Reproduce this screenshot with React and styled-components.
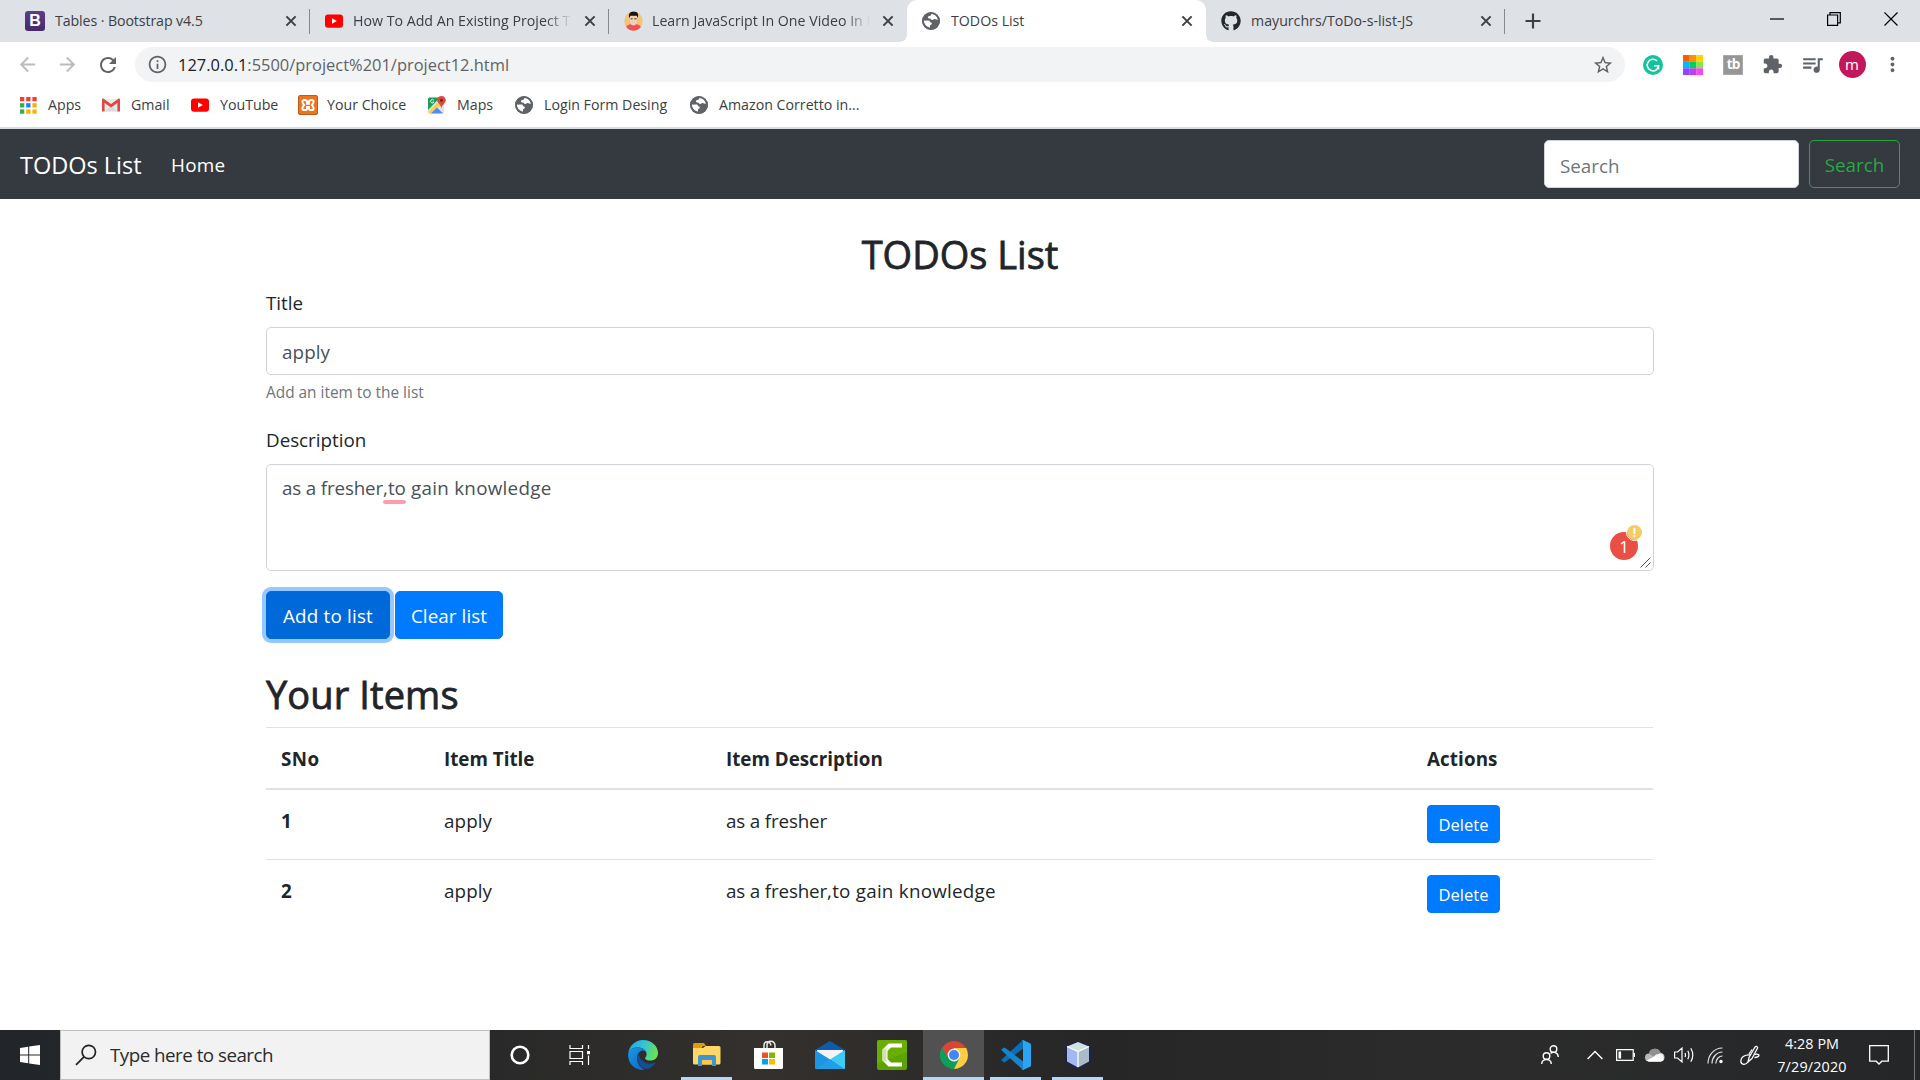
import React from "react";
import styled, { createGlobalStyle } from "styled-components";
import {
  MdInfoOutline,
  MdStarBorder,
  MdExtension,
  MdQueueMusic,
  MdMoreVert,
  MdArrowBack,
  MdArrowForward,
  MdRefresh,
} from "react-icons/md";
import { FaGithub } from "react-icons/fa";

const Global = createGlobalStyle`
  *, *::before, *::after { box-sizing: border-box; }
  html, body { margin: 0; padding: 0; background: #fff; overflow: hidden; }
  body { font-family: "Open Sans", "Noto Sans", sans-serif; color: #212529; font-size: 18.8px; }
  svg { display: block; flex: none; }
  button, input, textarea { font-family: inherit; }
`;

const Screen = styled.div`
  width: 1920px;
  height: 1080px;
  display: flex;
  flex-direction: column;
  overflow: hidden;
`;

const Label = styled.span`
  white-space: nowrap;
  letter-spacing: ${(p) => p.$ls || 0}px;
`;

/* ---------- browser tabs ---------- */
const TabStrip = styled.div`
  height: 42px;
  flex: none;
  display: flex;
  background: #dee1e6;
  padding-left: 10px;
`;
const Tab = styled.div`
  width: ${(p) => p.$w || 299}px;
  height: 42px;
  display: flex;
  align-items: center;
  padding: 0 13px 1px 15px;
  flex: none;
  border-radius: ${(p) => (p.$active ? "10px 10px 0 0" : "0")};
  background: ${(p) => (p.$active ? "#fff" : "transparent")};
  font-size: 14.2px;
  color: #3c4043;
`;
const TabTitle = styled.div`
  flex: 1;
  margin-left: ${(p) => p.$ml || 10}px;
  overflow: hidden;
  white-space: nowrap;
  letter-spacing: ${(p) => p.$ls || 0}px;
  ${(p) => p.$fade && "mask-image: linear-gradient(90deg, #000 88%, transparent 100%);"}
`;
const TabClose = styled.div`
  width: 12px;
  margin-left: 12px;
`;
const TabSeparator = styled.div`
  width: 1px;
  height: 25px;
  margin-top: 9px;
  margin-left: -1px;
  background: #85888c;
`;
const TabFoot = styled.div`
  width: 7px;
  height: 7px;
  align-self: flex-end;
  flex: none;
  margin-left: ${(p) => (p.$side === "left" ? "-7px" : "0")};
  margin-right: ${(p) => (p.$side === "left" ? "0" : "-7px")};
  background: radial-gradient(circle at ${(p) => (p.$side === "left" ? "0 0" : "100% 0")}, transparent 6.5px, #fff 7px);
`;
const NewTab = styled.div`
  margin: 13px 0 0 20px;
`;
const WindowControls = styled.div`
  margin-left: auto;
  display: flex;
  align-items: center;
  height: 37px;
  gap: 43px;
  padding-right: 22px;
`;

/* ---------- toolbar ---------- */
const Toolbar = styled.div`
  height: 45px;
  flex: none;
  display: flex;
  align-items: center;
  padding-left: 16px;
`;
const NavIcons = styled.div`
  display: flex;
  gap: 17px;
  width: 119px;
  color: #5f6368;
`;
const Omnibox = styled.div`
  width: 1490px;
  height: 35px;
  border-radius: 18px;
  background: #f1f3f4;
  display: flex;
  align-items: center;
  padding: 0 11px 0 12px;
  color: #5f6368;
`;
const Url = styled.div`
  flex: 1;
  margin-left: 10px;
  font-size: 16.45px;
  line-height: 30px;
  b { font-weight: 400; color: #202124; }
`;
const Extensions = styled.div`
  display: flex;
  align-items: center;
  margin-left: 16px;
  color: #5f6368;
`;
const ExtSlot = styled.div`
  width: ${(p) => p.$w || 40}px;
  display: flex;
  justify-content: center;
  flex: none;
`;
const Round = styled.div`
  width: ${(p) => p.$d}px;
  height: ${(p) => p.$d}px;
  border-radius: 50%;
  background: ${(p) => p.$bg};
  color: #fff;
  display: flex;
  align-items: center;
  justify-content: center;
  font-size: ${(p) => p.$fs}px;
  line-height: 1;
`;
const GrammarIcon = () => (
  <svg width="20" height="20" viewBox="0 0 20 20">
    <circle cx="10" cy="10" r="10" fill="#15c39a" />
    <path d="M14 5.800A5.800 5.800 0 1015.800 10.400M11 10.800h4.500v3.600" fill="none" stroke="#fff" strokeWidth="1.600" />
  </svg>
);

/* ---------- bookmarks ---------- */
const Bookmarks = styled.div`
  height: 40px;
  flex: none;
  display: flex;
  align-items: center;
  padding: 0 0 4px 20px;
  font-size: 14.2px;
  color: #3c4043;
`;
const Bookmark = styled.div`
  width: ${(p) => p.$w}px;
  flex: none;
  display: flex;
  align-items: center;
`;
const BookmarkIcon = styled.div`
  width: ${(p) => p.$w || 29}px;
  flex: none;
`;
const BookmarkName = styled.span`
  white-space: nowrap;
  padding-bottom: 2px;
`;
const ChromeEdge = styled.div`
  height: 2px;
  flex: none;
  background: #dadce0;
`;

/* ---------- page ---------- */
const Navbar = styled.nav`
  height: 70px;
  flex: none;
  background: #343a40;
  display: flex;
  align-items: center;
  padding: 0 20px;
  color: #fff;
`;
const Brand = styled.div`
  width: 151px;
  font-size: 23.5px;
  line-height: 36px;
  padding-top: 2px;
`;
const NavLink = styled.div`
  font-size: 18.9px;
  letter-spacing: 0.2px;
  padding-top: 2px;
`;
const NavForm = styled.div`
  margin-left: auto;
  display: flex;
  gap: 10px;
`;
const SearchInput = styled.input`
  width: 255px;
  height: 48px;
  border: 1px solid #ced4da;
  border-radius: 5px;
  padding: 3px 16px 0 15px;
  font-size: 18.8px;
  background: #fff;
  &::placeholder { color: #6c757d; opacity: 1; }
`;
const Button = styled.button`
  width: ${(p) => p.$w}px;
  height: ${(p) => p.$h || 48}px;
  padding: ${(p) => p.$pad || "2px 0 0"};
  border: 1px solid ${(p) => p.$border || p.$bg};
  border-radius: ${(p) => p.$r || 5}px;
  background: ${(p) => p.$bg};
  color: ${(p) => p.$color || "#fff"};
  font-size: ${(p) => p.$fs || 18.8}px;
  letter-spacing: ${(p) => p.$ls || 0}px;
  white-space: nowrap;
  box-shadow: ${(p) => (p.$focus ? "0 0 0 4px #94c8fe" : "none")};
`;
const Page = styled.main`
  flex: 1;
  width: 1388px;
  margin: 0 auto;
  display: flex;
  flex-direction: column;
`;
const Heading = styled.h2`
  margin: ${(p) => p.$m};
  height: 48px;
  line-height: 46px;
  font-size: 38px;
  font-weight: 500;
  letter-spacing: ${(p) => p.$ls || 0}px;
  text-align: ${(p) => p.$align || "left"};
  -webkit-text-stroke: 0.8px #212529;
`;
const FieldLabel = styled.label`
  margin-top: ${(p) => p.$mt || 0}px;
  height: 30px;
  line-height: 30px;
`;
const TextField = styled.input`
  margin-top: 9px;
  width: 100%;
  height: 48px;
  border: 1px solid #ced4da;
  border-radius: 5px;
  padding: 1px 16px 0 15px;
  font-size: 18.8px;
  letter-spacing: 0.1px;
  color: #495057;
`;
const Hint = styled.small`
  margin-top: 6px;
  height: 24px;
  line-height: 24px;
  font-size: 15.4px;
  color: #6c757d;
`;
const AreaWrap = styled.div`
  position: relative;
  margin-top: 9px;
  height: 107px;
  border: 1px solid #ced4da;
  border-radius: 5px;
  padding: 8px 15px;
  line-height: 30px;
  color: #495057;
`;
const Misspelt = styled.span`
  position: relative;
  &::after {
    content: "";
    position: absolute;
    left: 0;
    right: 0;
    bottom: -3px;
    height: 4px;
    border-radius: 2px;
    background: #ff9caf;
  }
`;
const Badge = styled.div`
  position: absolute;
  right: 15px;
  bottom: 10px;
`;
const Alert = styled.div`
  position: absolute;
  right: -5px;
  top: -8px;
  border: 1px solid #fff;
  border-radius: 50%;
  font-weight: 700;
`;
const Grip = styled.div`
  position: absolute;
  right: 2px;
  bottom: 2px;
`;
const Actions = styled.div`
  margin-top: 20px;
  display: flex;
  gap: 5px;
`;
const Row = styled.div`
  display: grid;
  width: 1387px;
  grid-template-columns: 163px 282px 701px 1fr;
  height: ${(p) => p.$h}px;
  padding: 15px 0 0 15px;
  border-top: 1px solid #dee2e6;
  border-bottom: ${(p) => (p.$head ? "2px solid #dee2e6" : "0")};
  margin-top: ${(p) => (p.$flush ? "-1px" : "0")};
  line-height: 30px;
  align-items: start;
  font-weight: ${(p) => (p.$head ? 700 : 400)};
`;
const Cell = styled.div`
  padding-top: 1px;
  font-weight: ${(p) => (p.$bold ? 700 : "inherit")};
  letter-spacing: ${(p) => p.$ls || 0}px;
  white-space: nowrap;
`;

/* ---------- taskbar ---------- */
const Taskbar = styled.footer`
  height: 50px;
  flex: none;
  display: flex;
  align-items: stretch;
  background: linear-gradient(90deg, #22262a 0, #292929 490px, #33302d 760px, #2f2d2b 880px, #262627 1100px, #2c2c2c 1500px, #242628 1920px);
  color: #fff;
`;
const Slot = styled.div`
  width: ${(p) => p.$w || 62}px;
  flex: none;
  display: flex;
  align-items: center;
  justify-content: center;
  background: ${(p) => (p.$current ? "#515151" : "transparent")};
  box-shadow: ${(p) => (p.$current ? "inset 0 -3px #b0d8fb" : "none")};
`;
const RunningSlot = styled(Slot)`
  width: 51px;
  margin: 0 5px 0 6px;
  box-shadow: inset 0 -3px #b0d8fb;
`;
const TaskSearch = styled.div`
  width: 430px;
  border: 1px solid #bfbfbf;
  background: #f2f2f2;
  display: flex;
  align-items: center;
  padding-left: 14px;
  gap: 13px;
  font-size: 18.8px;
  color: #2b2b2b;
`;
const Tray = styled.div`
  margin-left: auto;
  display: flex;
  align-items: center;
`;
const Clock = styled.div`
  width: 86px;
  display: flex;
  flex-direction: column;
  align-items: center;
  font-size: 14.4px;
  line-height: 23px;
`;
const PeekEdge = styled.div`
  width: 6px;
  height: 50px;
  border-left: 1px solid #77797b;
`;

/* ---------- icons ---------- */
const Close = () => (
  <svg width="12" height="12" viewBox="0 0 12 12" stroke="#3c4043" strokeWidth="2">
    <path d="M1.4 1.4l9.2 9.2M10.6 1.4l-9.2 9.2" />
  </svg>
);
const Bootstrap = styled.div`
  width: 20px;
  height: 20px;
  border-radius: 3px;
  background: linear-gradient(#5b3d88, #45296b);
  color: #fff;
  font: 700 16px/20px "Liberation Sans", sans-serif;
  text-align: center;
  flex: none;
`;
const YouTube = () => (
  <svg width="18" height="18" viewBox="0 0 18 18">
    <rect x="0" y="2.4" width="18" height="13.4" rx="3" fill="#f00" />
    <path d="M7 6.2v5.6l4.8-2.8z" fill="#fff" />
  </svg>
);
const Globe = () => (
  <svg width="18" height="18" viewBox="0 0 18 18">
    <circle cx="9" cy="9" r="9" fill="#5f6368" />
    <path
      d="M9.6 1.9c-.9.5-.4 1.3-1.3 1.9-1 .6-2.3.2-2.4 1.5 0 1 .9 1.2 1.9 1.2 1.2 0 1.1 1.3 2.2 1.4 1.3.1 1.4-1.2 2.7-1 1.5.2 1.6.9 3.3.9-.2-3-2.9-5.9-6.4-5.9zM1.8 8.6c.1 3.7 2.7 6.5 6.2 7.2v-2c.1-1 1.5-.9 1.8-2.1.3-1.2-1.5-1-1.9-1.9-.4-.8-.2-1.3-1.6-1.3-1.7.1-2.9.3-4.5.1z"
      fill="#fff"
    />
    <circle cx="9" cy="9" r="8" fill="none" stroke="#5f6368" strokeWidth="1.6" />
  </svg>
);
const Portrait = () => (
  <svg width="19" height="20" viewBox="0 0 19 20">
    <defs>
      <clipPath id="face"><ellipse cx="9.5" cy="10" rx="9.2" ry="9.8" /></clipPath>
    </defs>
    <g clipPath="url(#face)">
      <rect width="19" height="20" fill="#f3c579" />
      <path d="M1 20c0-6 4-7 8.500-7s8.500 1 8.500 7z" fill="#f0525a" />
      <path d="M6 5h7v5q-.5 4.500-3.500 4.500T6 10z" fill="#f0d0ba" />
      <path d="M5.200 7C4 2.500 6.500.3 9.700.5c4 0 5.300 2.500 4 6.500l-.9-2.200H6.500z" fill="#1b1412" />
      <path d="M6.500 7.800h2.200M10.300 7.800h2.200" stroke="#4a332a" strokeWidth="1" />
    </g>
  </svg>
);
const AppsGrid = () => (
  <svg width="17" height="17" viewBox="0 0 17 17">
    {["#ea4335", "#ea4335", "#ea4335", "#34a853", "#1a82f5", "#fbb004", "#34a853", "#fbb004", "#fbb004"].map((c, i) => (
      <rect key={i} x={(i % 3) * 6.2} y={Math.floor(i / 3) * 6.2} width="4.3" height="4.3" fill={c} />
    ))}
  </svg>
);
const Gmail = () => (
  <svg width="18" height="18" viewBox="0 0 18 18">
    <path d="M1 3h16v12.500H1z" fill="#eceaea" />
    <path d="M2.500 15.500L9 9.500l6.500 6z" fill="#dcdada" />
    <path d="M0 3.800C0 2.600 1.200 2.300 2 2.900L9 8l7-5.100c.8-.6 2-.3 2 .9v11.700h-2.600V7L9 11.500 2.600 7v8.500H0z" fill="#dd4b3e" />
  </svg>
);
const Xampp = () => (
  <svg width="20" height="20" viewBox="0 0 20 20">
    <rect x=".5" y=".5" width="19" height="19" rx="1.500" fill="#f0731e" stroke="#bd5c1a" />
    <path
      d="M9 8.800V6.600C9 4.400 4.400 4.400 4.400 6.600c0 1.600.8 2 1.800 3.400-1 1.400-1.800 1.800-1.800 3.400 0 2.200 4.600 2.200 4.600 0V12h2v1.400c0 2.200 4.600 2.200 4.600 0 0-1.600-.8-2-1.800-3.400 1-1.400 1.800-1.800 1.800-3.400 0-2.200-4.600-2.200-4.600 0V8.800z"
      fill="none"
      stroke="#fff"
      strokeWidth="1.900"
    />
  </svg>
);
const Maps = () => (
  <svg width="18" height="18" viewBox="0 0 18 18">
    <rect y="1.500" width="16" height="16" rx="1.500" fill="#dfe3e6" />
    <path d="M0 3a1.500 1.500 0 011.500-1.500H12L0 14z" fill="#1e9d58" />
    <path d="M0 16L10.500 5.500l3 3L4.500 17.500H1.500z" fill="#fcd04b" />
    <path d="M3 17.500l6-6 6 6z" fill="#4b8df8" />
    <path d="M13.500 0A4.300 4.300 0 009.200 4.300c0 3 3.600 4.200 4.300 8 .7-3.800 4.300-5 4.300-8A4.300 4.300 0 0013.500 0z" fill="#dd4b3e" />
    <circle cx="13.500" cy="4.300" r="1.500" fill="#7c1f16" />
    <path d="M5.800 4.200A1.800 1.800 0 106 6H4.500" stroke="#fff" strokeWidth=".9" fill="none" />
  </svg>
);
const ColorGrid = () => (
  <svg width="20" height="20" viewBox="0 0 21 21">
    {["#ff5a00", "#ff9000", "#ffd400", "#00b8ff", "#00cf5d", "#85e34c", "#8d48ff", "#c43cf5", "#ff42f7"].map((c, i) => (
      <rect key={i} x={(i % 3) * 7} y={Math.floor(i / 3) * 7} width="7.1" height="7.1" fill={c} />
    ))}
  </svg>
);
const TubeBuddy = styled.div`
  width: 20px;
  height: 20px;
  background: #969696;
  border: 1px solid #aaa;
  color: #fff;
  font: 700 13.5px/17px "Open Sans", sans-serif;
  letter-spacing: -1px;
  text-align: center;
`;
const Windows = () => (
  <svg width="20" height="20" viewBox="0 0 20 20" fill="#fff">
    <path d="M0 2.900l8.200-1.100v7.700H0zM9.200 1.600L20 0v9.500H9.200zM0 10.500h8.200v7.700L0 17.100zM9.200 10.500H20V20L9.200 18.400z" />
  </svg>
);
const Magnifier = () => (
  <svg width="22" height="22" viewBox="0 0 22 22" fill="none" stroke="#222" strokeWidth="1.700">
    <circle cx="13.800" cy="8" r="6.700" />
    <path d="M9 12.800L1 20.800" />
  </svg>
);
const TaskView = () => (
  <svg width="22" height="20" viewBox="0 0 22 20" fill="none" stroke="#fff" strokeWidth="1.200">
    <path d="M1 0v3.500h12.500V0M1 6.500h12.500v7H1zM1 20v-3.500h12.500V20M19.500 0v4M19.500 10.500V20" />
    <path d="M18 6h3v3.200h-3z" fill="#fff" stroke="none" />
  </svg>
);
const Edge = () => (
  <svg width="30" height="30" viewBox="0 0 30 30">
    <defs>
      <linearGradient id="ed1" x1="0" x2="1" y1=".2" y2=".5">
        <stop offset="0" stopColor="#1ea8e8" />
        <stop offset=".5" stopColor="#35c3d5" />
        <stop offset="1" stopColor="#6be34f" />
      </linearGradient>
      <linearGradient id="ed2" x1="0" x2="1" y1="0" y2="1">
        <stop offset="0" stopColor="#1a9be6" />
        <stop offset="1" stopColor="#0a63bd" />
      </linearGradient>
    </defs>
    <path d="M.3 13C1.500 5.500 7.500 0 15 0c8.500 0 15 6 15 13 0 5-3.500 7.600-7.600 7.600-3.600 0-5.400-1.300-5.400-2.400 0-.7 1.600-1.400 1.600-4C18.600 10 14.500 7.500 9.800 7.500 5 7.500 1.500 9.500.3 13z" fill="url(#ed1)" />
    <path d="M.2 14C.6 9.800 4.500 7.500 9.800 7.500c4.700 0 8 2.500 8.600 5.200-1.300-2-3.400-2.600-5-2-3 1.200-4.400 4.500-4.400 7.600 0 5 3.300 9.500 8 11.500C7.500 31 .1 24 .1 15z" fill="url(#ed2)" />
    <path d="M11.500 13c-3.500 5.500-1.500 11.500 3 14.500 4.500 2.700 9.500.8 12.600-4 .5-.8-.1-1.200-.8-.8-2.600 1.300-6.600 1.300-9.600-.4-4-2.100-6.300-5.800-5.200-9.300z" fill="#134f97" />
  </svg>
);
const Folder = () => (
  <svg width="28" height="24" viewBox="0 0 28 24">
    <path d="M0 1.500Q0 0 1.500 0H11l2 3h-3L8 6H0z" fill="#e39a00" />
    <path d="M0 5l10 0 2.500-2H26q1.500 0 1.500 1.500V20q0 1.500-1.500 1.500H1.500Q0 21.500 0 20z" fill="#ffd765" />
    <path d="M5 23V14q0-2 2-2h14q2 0 2 2v9h-4v-6H9v6z" fill="#3f94d6" />
    <path d="M9 17h10v4.500H9z" fill="#fcc742" />
  </svg>
);
const Store = () => (
  <svg width="29" height="30" viewBox="0 0 29 30">
    <path d="M10 9V5.500C10 .5 16 .5 17 5.500M13 9V4.500C14 -.5 21 .5 21 6v3" fill="none" stroke="#e8e8e8" strokeWidth="1.500" />
    <path d="M0 8h29v19.500Q29 29 27.500 29h-26Q0 29 0 27.500z" fill="#fff" />
    <path d="M8 12.500h6v5.500H8z" fill="#f25022" />
    <path d="M15 12.500h6v5.500h-6z" fill="#7fba00" />
    <path d="M8 19h6v5.500H8z" fill="#00a4ef" />
    <path d="M15 19h6v5.500h-6z" fill="#ffb900" />
  </svg>
);
const Mail = () => (
  <svg width="30" height="28" viewBox="0 0 30 28">
    <path d="M0 9L15 0l15 9v6H0z" fill="#0b5cad" />
    <path d="M2 9h26v4L15 19 2 12z" fill="#f4f4f4" />
    <path d="M0 9l15 9.500L30 28H1q-1 0-1-1z" fill="#1b96e2" />
    <path d="M30 9L15 18.500 29 28q1 0 1-1z" fill="#3dcaf4" />
    <path d="M15 18.500L1 28h28z" fill="#209fe6" />
  </svg>
);
const Camtasia = () => (
  <svg width="30" height="30" viewBox="0 0 30 30">
    <rect width="30" height="30" rx="2" fill="#5da300" />
    <path d="M0 2q0-2 2-2h26q2 0 2 2v10L0 24z" fill="#73b505" opacity=".6" />
    <path d="M11.500 3.500H25v4H14l-3.500 3.500v8l3.500 3.500h11v4H11.500l-6-6v-11z" fill="#fff" />
    <path d="M5.500 9.500L9.500 8v14l-4-1.500z" fill="#cfe3b0" />
  </svg>
);
const Chrome = () => (
  <svg width="28" height="28" viewBox="0 0 28 28">
    <path d="M14 14L1.880 7A14 14 0 0126.120 7z" fill="#db4437" />
    <path d="M14 14L26.120 7A14 14 0 0114 28z" fill="#ffcd40" />
    <path d="M14 14v14A14 14 0 011.880 7z" fill="#0f9d58" />
    <path d="M14 7.600h12.400l-.3-.6H14zM14 7.600L26.400 7.600 19.500 17.200z" fill="#ffcd40" />
    <path d="M1.880 7L8.500 17.200 14 7.600z" fill="#db4437" />
    <path d="M1.880 7L8.500 17.200 14 20.400 19.500 17.200 14 28A14 14 0 011.880 7z" fill="#0f9d58" />
    <circle cx="14" cy="14" r="6.400" fill="#f1f1f1" />
    <circle cx="14" cy="14" r="5" fill="#4285f4" />
  </svg>
);
const VSCode = () => (
  <svg width="30" height="30" viewBox="0 0 30 30">
    <path d="M.7 19.500L21.500.5l2 7L4 22.300q-.7.500-1.300 0L.7 20.700q-.7-.6 0-1.200z" fill="#0a6fb5" />
    <path d="M.7 10.500L21.500 29.500l2-7L4 7.700q-.7-.5-1.300 0L.7 9.300q-.7.600 0 1.200z" fill="#1585cf" />
    <path d="M22 0l7 3.200q1 .5 1 1.500v20.600q0 1-1 1.500L22 30q-1 0-1.500-.5 1.500.3 1.500-2V2.500q0-2.300-1.500-2Q21 0 22 0z" fill="#29a5f2" />
  </svg>
);
const Cube = () => (
  <svg width="28" height="30" viewBox="0 0 28 30">
    <path d="M14 2.500L25.500 7v14.500L14 27.500 2.500 21.500V7z" fill="#1d2750" stroke="#20224e" strokeWidth="3" strokeLinejoin="round" />
    <path d="M14 2l11 4.500-11 5-11-5z" fill="#cfe3dc" />
    <path d="M3 6.500l11 5v16L3 21.500z" fill="#a3b8f0" />
    <path d="M25 6.500l-11 5v16l11-6z" fill="#a9bac9" />
    <path d="M3 6.500l11 5 11-5M14 12v15" stroke="#fff" strokeWidth="1.300" fill="none" />
  </svg>
);
const People = () => (
  <svg width="18" height="20" viewBox="0 0 18 20" fill="none" stroke="#fff" strokeWidth="1.400">
    <circle cx="12.500" cy="4" r="3.300" />
    <circle cx="5.500" cy="11" r="3.300" />
    <path d="M.7 19c0-6 9.600-6 9.600 0M9.500 8.300c3-2 7.500-1 7.800 3.700" />
  </svg>
);
const Chevron = () => (
  <svg width="16" height="10" viewBox="0 0 16 10" fill="none" stroke="#fff" strokeWidth="1.400">
    <path d="M.6 9L8 1.500 15.400 9" />
  </svg>
);
const Battery = () => (
  <svg width="19" height="12" viewBox="0 0 19 12">
    <path d="M.6.6h16.600v10.800H.6z" fill="none" stroke="#fff" strokeWidth="1.200" />
    <path d="M2.500 2.500h2.600v7H2.500zM17.500 4H19v4h-1.500z" fill="#fff" />
  </svg>
);
const Cloud = () => (
  <svg width="20" height="14" viewBox="0 0 20 14">
    <path d="M4 13.500A4 4 0 014 5.500 6 6 0 0115.500 4.800 4.400 4.400 0 0116 13.500z" fill="#b9b9b9" />
    <path d="M4 5.500A6 6 0 0115.500 4.800L9 9z" fill="#8f8f8f" />
    <path d="M3 13.500L11 6.500l4.500-1a4.200 4.200 0 01.5 8z" fill="#fff" opacity=".85" />
    <path d="M1.500 12.500L10 8.500l9 3.500-3 1.500H4z" fill="#fff" />
  </svg>
);
const Volume = () => (
  <svg width="21" height="18" viewBox="0 0 21 18" fill="none" stroke="#fff" strokeWidth="1.200">
    <path d="M.6 6h3L8 2v14l-4.400-4h-3zM11 7q1 2 0 4M13.800 4.800q2.200 4.200 0 8.400M16.800 2.200q4 6.800 0 13.600" />
  </svg>
);
const Wifi = () => (
  <svg width="17" height="17" viewBox="0 0 17 17" fill="none" stroke="#e4e4e4" strokeWidth="1.200">
    <path d="M1 16.500C1 8 7 1 15.500 1M5 16.500C5 10.500 9.500 5 15.500 5M8.800 16.500c0-4 3-7.500 6.700-7.500" />
    <circle cx="14" cy="14.500" r="1.700" fill="#fff" stroke="none" />
  </svg>
);
const Pen = () => (
  <svg width="20" height="21" viewBox="0 0 20 21" fill="none" stroke="#fff" strokeWidth="1.300" strokeLinejoin="round">
    <path d="M8 17l1-4.500L15 2q1.500-1.500 2.700.8L12 13.500z" />
    <path d="M12 4.500L9 9M10.500 10C4 9.500.8 12.500.8 16c0 4 5 4.500 7 1M14.500 9.500c5.500-1.500 6.500 2.500 0 3" />
  </svg>
);
const Note = () => (
  <svg width="20" height="20" viewBox="0 0 20 20" fill="none" stroke="#fff" strokeWidth="1.300">
    <path d="M.7.7h18.600v15.500h-6.500L10 19l-2.800-2.800H.7z" />
  </svg>
);

const items = [
  { no: "1", title: "apply", lead: "as a fresher", rest: "" },
  { no: "2", title: "apply", lead: "as a fresher", rest: ",to gain knowledge" },
];

export default function App() {
  return (
    <Screen>
      <Global />
      <TabStrip>
        <Tab $w={300}>
          <Bootstrap>B</Bootstrap>
          <TabTitle $ls={-0.1}>Tables · Bootstrap v4.5</TabTitle>
          <TabClose><Close /></TabClose>
        </Tab>
        <TabSeparator />
        <Tab $w={299}>
          <YouTube />
          <TabTitle $fade>How To Add An Existing Project T</TabTitle>
          <TabClose><Close /></TabClose>
        </Tab>
        <TabSeparator />
        <Tab $w={298}>
          <Portrait />
          <TabTitle $fade $ml={9}>Learn JavaScript In One Video In H</TabTitle>
          <TabClose><Close /></TabClose>
        </Tab>
        <TabFoot $side="left" />
        <Tab $active>
          <Globe />
          <TabTitle $ml={11}>TODOs List</TabTitle>
          <TabClose><Close /></TabClose>
        </Tab>
        <TabFoot $side="right" />
        <Tab $w={299}>
          <FaGithub size={20} color="#24292e" />
          <TabTitle>mayurchrs/ToDo-s-list-JS</TabTitle>
          <TabClose><Close /></TabClose>
        </Tab>
        <TabSeparator />
        <NewTab>
          <svg width="16" height="16" viewBox="0 0 16 16" stroke="#3c4043" strokeWidth="2.200">
            <path d="M8 .5v15M.5 8h15" />
          </svg>
        </NewTab>
        <WindowControls>
          <svg width="14" height="2"><path d="M0 1h14" stroke="#000" strokeWidth="1.200" /></svg>
          <svg width="14" height="14" fill="none" stroke="#000" strokeWidth="1.200">
            <path d="M.6 3h10v10.300H.6zM3 3V.6h10.300v10.300h-2.700" />
          </svg>
          <svg width="14" height="14" stroke="#000" strokeWidth="1.200"><path d="M.5.5l13 13M13.500.5l-13 13" /></svg>
        </WindowControls>
      </TabStrip>

      <Toolbar>
        <NavIcons>
          <MdArrowBack size={23} color="#babcbe" />
          <MdArrowForward size={23} color="#babcbe" />
          <MdRefresh size={24} />
        </NavIcons>
        <Omnibox>
          <MdInfoOutline size={21} />
          <Url><b>127.0.0.1</b>:5500/project%201/project12.html</Url>
          <MdStarBorder size={22} />
        </Omnibox>
        <Extensions>
          <ExtSlot $w={24}><GrammarIcon /></ExtSlot>
          <ExtSlot $w={56}><ColorGrid /></ExtSlot>
          <ExtSlot $w={24}><TubeBuddy>tb</TubeBuddy></ExtSlot>
          <ExtSlot $w={55}><MdExtension size={21} /></ExtSlot>
          <ExtSlot $w={24}><MdQueueMusic size={25} /></ExtSlot>
          <ExtSlot $w={56}><Round $d={27} $bg="#c2185b" $fs={15}>m</Round></ExtSlot>
          <ExtSlot $w={24}><MdMoreVert size={23} /></ExtSlot>
        </Extensions>
      </Toolbar>

      <Bookmarks>
        <Bookmark $w={82}><BookmarkIcon $w={28}><AppsGrid /></BookmarkIcon><BookmarkName>Apps</BookmarkName></Bookmark>
        <Bookmark $w={89}><BookmarkIcon><Gmail /></BookmarkIcon><BookmarkName>Gmail</BookmarkName></Bookmark>
        <Bookmark $w={107}><BookmarkIcon><YouTube /></BookmarkIcon><BookmarkName>YouTube</BookmarkName></Bookmark>
        <Bookmark $w={130}><BookmarkIcon><Xampp /></BookmarkIcon><BookmarkName>Your Choice</BookmarkName></Bookmark>
        <Bookmark $w={87}><BookmarkIcon><Maps /></BookmarkIcon><BookmarkName>Maps</BookmarkName></Bookmark>
        <Bookmark $w={175}><BookmarkIcon><Globe /></BookmarkIcon><BookmarkName>Login Form Desing</BookmarkName></Bookmark>
        <Bookmark $w={175}><BookmarkIcon><Globe /></BookmarkIcon><BookmarkName>Amazon Corretto in...</BookmarkName></Bookmark>
      </Bookmarks>
      <ChromeEdge />

      <Navbar>
        <Brand>TODOs List</Brand>
        <NavLink>Home</NavLink>
        <NavForm>
          <SearchInput placeholder="Search" />
          <Button $w={91} $bg="transparent" $border="#28a745" $color="#28a745">Search</Button>
        </NavForm>
      </Navbar>

      <Page>
        <Heading $m="32px 0 9px" $align="center">TODOs List</Heading>
        <FieldLabel>Title</FieldLabel>
        <TextField defaultValue="apply" />
        <Hint>Add an item to the list</Hint>
        <FieldLabel $mt={20}>Description</FieldLabel>
        <AreaWrap>
          <Label $ls={-0.15}>as a fresher</Label><Misspelt>,to</Misspelt><Label $ls={0.28}> gain knowledge</Label>
          <Badge>
            <Round $d={28} $bg="#e94f45" $fs={17}>1</Round>
            <Alert><Round $d={15} $bg="#f3cd63" $fs={12}>!</Round></Alert>
          </Badge>
          <Grip>
            <svg width="11" height="11" stroke="#555" strokeWidth="1"><path d="M.5 10.500l10-10M5.500 10.500l5-5" /></svg>
          </Grip>
        </AreaWrap>
        <Actions>
          <Button $w={124} $bg="#0069d9" $ls={0.2} $focus>Add to list</Button>
          <Button $w={108} $bg="#007bff" $ls={0.1}>Clear list</Button>
        </Actions>
        <Heading $m="32px 0 8px" $ls={0.1}>Your Items</Heading>
        <Row $head $h={63}>
          <Cell $ls={0.5}>SNo</Cell>
          <Cell>Item Title</Cell>
          <Cell>Item Description</Cell>
          <Cell $ls={0.1}>Actions</Cell>
        </Row>
        {items.map((it, i) => (
          <Row key={it.no} $h={i === 0 ? 70 : 69} $flush={i === 0}>
            <Cell $bold>{it.no}</Cell>
            <Cell $ls={0.1}>{it.title}</Cell>
            <Cell><Label $ls={-0.15}>{it.lead}</Label><Label $ls={0.25}>{it.rest}</Label></Cell>
            <Button $w={73} $h={38} $r={4} $pad="0" $bg="#007bff" $fs={16.5}>Delete</Button>
          </Row>
        ))}
      </Page>

      <Taskbar>
        <Slot $w={60}><Windows /></Slot>
        <TaskSearch><Magnifier /><Label $ls={-0.52}>Type here to search</Label></TaskSearch>
        <Slot $w={60}>
          <svg width="20" height="20"><circle cx="10" cy="10" r="8.300" fill="none" stroke="#fff" strokeWidth="2.600" /></svg>
        </Slot>
        <Slot $w={60}><TaskView /></Slot>
        <Slot $w={65}><Edge /></Slot>
        <RunningSlot><Folder /></RunningSlot>
        <Slot><Store /></Slot>
        <Slot><Mail /></Slot>
        <Slot><Camtasia /></Slot>
        <Slot $w={61} $current><Chrome /></Slot>
        <RunningSlot><VSCode /></RunningSlot>
        <RunningSlot><Cube /></RunningSlot>
        <Tray>
          <Slot $w={44}><People /></Slot>
          <Slot $w={46}><Chevron /></Slot>
          <Slot $w={14}><Battery /></Slot>
          <Slot $w={45}><Cloud /></Slot>
          <Slot $w={15}><Volume /></Slot>
          <Slot $w={47}><Wifi /></Slot>
          <Slot $w={22}><Pen /></Slot>
          <Slot $w={8} />
          <Clock><Label $ls={0.05}>4:28 PM</Label><Label $ls={0.15}>7/29/2020</Label></Clock>
          <Slot $w={47}><Note /></Slot>
          <Slot $w={12} />
          <PeekEdge />
        </Tray>
      </Taskbar>
    </Screen>
  );
}
